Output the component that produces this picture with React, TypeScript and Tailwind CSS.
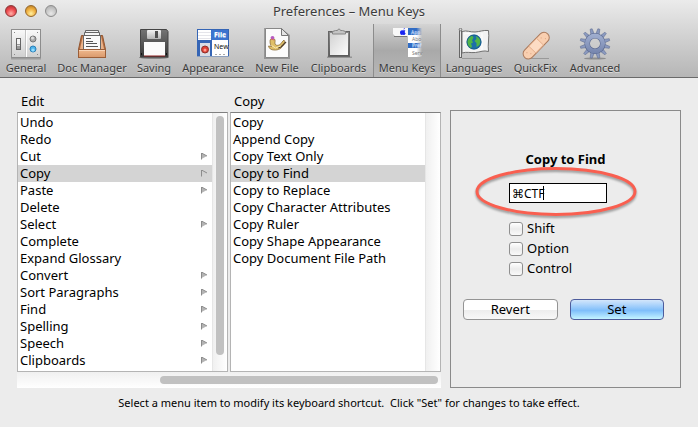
import { ReactNode, useState } from "react";
import clsx from "clsx";

type MenuItem = { name: string; sub?: boolean };
type ToolItem = { label: string; width: string; icon: ReactNode };

const GeneralIcon = () => (
  <svg width="32" height="32" viewBox="0 0 32 32">
    <defs>
      <linearGradient id="plate" x1="0" y1="0" x2="0" y2="1">
        <stop offset="0" stopColor="#fafafa" />
        <stop offset="1" stopColor="#cfcfcf" />
      </linearGradient>
    </defs>
    <rect x="1" y="3" width="30" height="28.500" fill="#777" opacity="0.5" />
    <rect x="1.500" y="1.500" width="29" height="28" fill="url(#plate)" stroke="#8d8d8d" />
    <path d="M15.500 2v27" stroke="#c4c4c4" />
    <path d="M16.500 2v27" stroke="#fff" />
    <rect x="6.500" y="10.500" width="4" height="11" fill="#999" stroke="#666" />
    <rect x="7" y="11" width="3" height="5" fill="#f5f5f5" />
    <rect x="7" y="17" width="3" height="1" fill="#ddd" />
    <circle cx="23" cy="11" r="3" fill="#a9a9a9" stroke="#777" />
    <circle cx="22.500" cy="10" r="1.500" fill="#ddd" />
    <circle cx="23" cy="21" r="3" fill="#4fb4ea" stroke="#2b7fb8" />
    <circle cx="23" cy="22" r="1.600" fill="#93dcff" />
    <g fill="#888">
      <rect x="4" y="4" width="1" height="1" />
      <rect x="27" y="4" width="1" height="1" />
      <rect x="4" y="26" width="1" height="1" />
      <rect x="27" y="26" width="1" height="1" />
    </g>
  </svg>
);

const DocManagerIcon = () => (
  <svg width="32" height="32" viewBox="0 0 32 32">
    <defs>
      <linearGradient id="tray" x1="0" y1="0" x2="0" y2="1">
        <stop offset="0" stopColor="#f0b98e" />
        <stop offset="1" stopColor="#d9996c" />
      </linearGradient>
    </defs>
    <path d="M5.500 7.500h21l3 14h-27z" fill="#b86f42" stroke="#92552f" />
    <path d="M7 8l-3 13h4V8zM25 8l3 13h-4V8z" fill="#e9b28a" />
    <path d="M9.500 2.500h13v4h-13z" fill="#f2f2f2" stroke="#666" />
    <path d="M8.500 4.500h15v5h-15z" fill="#f5f5f5" stroke="#666" />
    <path d="M7.500 7.500h17v14h-17z" fill="#fafafa" stroke="#666" />
    <path d="M10 10.500h5M10 13.500h7M10 15.500h11M10 18.500h12" stroke="#555" />
    <rect x="2.500" y="21.500" width="27" height="8" fill="url(#tray)" stroke="#9b5e38" />
    <path d="M3 22.500h26" stroke="#f8d5b8" />
  </svg>
);

const SavingIcon = () => (
  <svg width="32" height="32" viewBox="0 0 32 32">
    <defs>
      <linearGradient id="floppy" x1="0" y1="0" x2="0" y2="1">
        <stop offset="0" stopColor="#747474" />
        <stop offset="1" stopColor="#383838" />
      </linearGradient>
      <linearGradient id="shutter" x1="0" y1="0" x2="0" y2="1">
        <stop offset="0" stopColor="#f4f4f4" />
        <stop offset="1" stopColor="#b5b5b5" />
      </linearGradient>
    </defs>
    <ellipse cx="16" cy="29.500" rx="15" ry="1.300" fill="#777" />
    <path d="M2.500 1.500h26l1.500 2v25.500h-27.500z" fill="url(#floppy)" stroke="#444" />
    <rect x="9" y="2" width="14" height="9" rx="1" fill="url(#shutter)" />
    <rect x="17" y="3" width="3" height="7" fill="#505050" />
    <path d="M6 14h21v14H6z" fill="#fbfbfb" />
    <path d="M6 27.500h21v1H6z" fill="#8d2020" />
    <rect x="3" y="25" width="1" height="2" fill="#111" />
    <rect x="28" y="25" width="1" height="2" fill="#111" />
  </svg>
);

const AppearanceIcon = () => (
  <svg width="32" height="32" viewBox="0 0 32 32">
    <rect width="32" height="28" y="1" fill="#3565b5" />
    <path d="M1 2h13v10H1z" fill="#fff" />
    <path d="M1 4.500h13M1 7.500h13M1 10.500h13" stroke="#e5e5ea" />
    <path d="M14 2h17v10H14z" fill="#3c74ce" />
    <path d="M15 12h16v16H15z" fill="#fff" />
    <path d="M3 15h10v13H3z" fill="#d9dde6" />
    <path d="M0 28.500h32" stroke="#8da0bd" />
    <circle cx="8" cy="21.500" r="3.500" fill="#de3e33" stroke="#8d2f29" />
    <circle cx="8" cy="22" r="1.500" fill="#ff9e92" />
    <text x="17" y="9" fontSize="7" fontWeight="700" fontFamily="Noto Sans, sans-serif" fill="#fff">File</text>
    <text x="17" y="21" fontSize="7" fontFamily="Noto Sans, sans-serif" fill="#111">New</text>
    <path d="M18 26.500h2M22 26.500h2M26 26.500h2" stroke="#aaa" />
  </svg>
);

const NewFileIcon = () => (
  <svg width="32" height="32" viewBox="0 0 32 32">
    <path d="M3 0h17l9 7v24H3z" fill="#666" opacity="0.500" />
    <path d="M4.500.5h16l7 7v22h-23z" fill="#fbfbfb" stroke="#888" />
    <path d="M20.500.5v7h7z" fill="#e4e4e4" stroke="#777" />
    <path d="M9 13c0-3 4-4 5-1 .500 2-1 4 1 5s5-.500 6-3l2-2c1.500 3-.500 6-3 7.500 1 1-4 3-7 2.500-3 0-5-1.500-5.500-4l3 .500c-1-1.500-1.500-3-1.500-5z" fill="#dfbf68" stroke="#82632c" strokeWidth="0.700" />
    <path d="M25 14l-5 5-3 1" stroke="#4c3c2c" strokeWidth="1.300" fill="none" />
    <circle cx="11.500" cy="9.800" r="1.900" fill="#b65ac0" />
    <path d="M10 11l3 1" stroke="#d86a5b" />
    <path d="M10.500 17.500l4 2.500 5-2" stroke="#f8e9b0" fill="none" />
  </svg>
);

const ClipboardIcon = () => (
  <svg width="32" height="32" viewBox="0 0 32 32">
    <defs>
      <linearGradient id="sheet" x1="0" y1="0" x2="1" y2="1">
        <stop offset="0" stopColor="#d3d3d3" />
        <stop offset="1" stopColor="#fcfcfc" />
      </linearGradient>
      <linearGradient id="board" x1="0" y1="0" x2="0" y2="1">
        <stop offset="0" stopColor="#8a8a8a" />
        <stop offset="1" stopColor="#5a5a5a" />
      </linearGradient>
    </defs>
    <rect x="4" y="28.500" width="25" height="1.500" fill="#777" opacity="0.600" />
    <rect x="5.500" y="3.500" width="21" height="25" fill="url(#board)" stroke="#666" />
    <rect x="7" y="5" width="18" height="22" fill="url(#sheet)" />
    <path d="M9.500 6v-2.500l3-1h2l1-1.500h1l1 1.500h2l3 1v2.500z" fill="#c4c4c4" stroke="#868686" />
  </svg>
);

const MenuKeysIcon = () => (
  <svg width="32" height="32" viewBox="0 0 32 32">
    <defs>
      <linearGradient id="fade" x1="0" y1="0" x2="1" y2="0">
        <stop offset="0.600" stopColor="#fff" />
        <stop offset="1" stopColor="#fff" stopOpacity="0" />
      </linearGradient>
      <linearGradient id="fadeBlue" x1="0" y1="0" x2="1" y2="0">
        <stop offset="0.600" stopColor="#316cc4" />
        <stop offset="1" stopColor="#316cc4" stopOpacity="0" />
      </linearGradient>
    </defs>
    <path d="M2 0h15v8H4L2 6z" fill="#f8f8f8" />
    <path d="M3 8.500h13" stroke="#777" />
    <path d="M17 7h14v22H17z" fill="url(#fade)" />
    <path d="M17 0h14v7H17zM17 15h14v5H17z" fill="url(#fadeBlue)" />
    <path d="M12.500 1.500c1-.2 1.500-1 1.500-1.500-1 .2-1.500.8-1.500 1.500zM12 2.500c-1-.8-3-.2-3 2 0 1.800 1.200 2.700 2 2.500.6-.2 1-.2 1.600 0 .9.200 1.700-.8 2-1.800-1-.5-1.200-1.800-.2-2.400-.7-.8-1.600-.6-2.400-.3z" fill="#1824f2" />
    <g fontSize="5" fontFamily="Noto Sans, sans-serif">
      <text x="20" y="6" fill="#cfe0ff">App</text>
      <text x="21" y="13" fill="#777">Abo</text>
      <text x="21" y="19" fill="#cfe0ff">Pref</text>
      <text x="21" y="27" fill="#777">Serv</text>
    </g>
  </svg>
);

const LanguagesIcon = () => (
  <svg width="32" height="32" viewBox="0 0 32 32">
    <path d="M4 30.500h20" stroke="#999" />
    <path d="M4 3.500c5-1.500 8 .8 13 .5s8-2 13.500-1.500c1 7-1 14 0 21-5-1.500-8 .5-13 1s-9-1-13.500.500z" fill="#f3f3f3" stroke="#707070" />
    <path d="M6 6c4-1 7 0 10 0M24 5v17" stroke="#fff" fill="none" />
    <rect x="1.500" y="1.500" width="2" height="28" fill="#e5e5e5" stroke="#666" />
    <circle cx="2.500" cy="1.500" r="1.300" fill="#ddd" stroke="#777" />
    <circle cx="16" cy="14" r="7.500" fill="#1c6fa8" />
    <path d="M11 9.500l3-2 1.500 2-1.500 3 1 2-2 1 1 3-1.500 2-2.500-3-1-4zM18 8l3 2 1.500 3-1 4-3 2v-4l-2-2 2-2z" fill="#4fb548" />
    <circle cx="16" cy="14" r="7" fill="none" stroke="#17507d" opacity="0.600" />
  </svg>
);

const QuickFixIcon = () => (
  <svg width="32" height="32" viewBox="0 0 32 32">
    <path d="M7 30.500h22" stroke="#999" />
    <g transform="rotate(-46 16 17.500)">
      <rect x="-0.500" y="12.500" width="33" height="10.500" rx="5.200" fill="#f9cfb0" stroke="#ab7a5c" />
      <rect x="10.500" y="13" width="11" height="9.500" fill="#fcdcc4" stroke="#e0a884" strokeWidth="0.800" />
      <g fill="#e0aa86">
        <circle cx="4.500" cy="16" r="0.600" />
        <circle cx="6.500" cy="19.500" r="0.600" />
        <circle cx="25" cy="16" r="0.600" />
        <circle cx="27.500" cy="19.500" r="0.600" />
      </g>
    </g>
  </svg>
);

const AdvancedIcon = () => (
  <svg width="32" height="32" viewBox="0 0 32 32">
    <defs>
      <linearGradient id="gear" x1="0" y1="5" x2="0" y2="26" gradientUnits="userSpaceOnUse">
        <stop offset="0" stopColor="#a3b1d2" />
        <stop offset="1" stopColor="#7383ac" />
      </linearGradient>
    </defs>
    <ellipse cx="16" cy="30.500" rx="11" ry="1" fill="#8e8e8e" />
    {[0, 30, 60, 90, 120, 150, 180, 210, 240, 270, 300, 330].map((deg) => (
      <path
        key={deg}
        d="M14.300 6l.7-5.500h2l.7 5.500z"
        fill="#8a99bf"
        stroke="#5a688d"
        strokeWidth="0.500"
        transform={`rotate(${deg + 15} 16 15.500)`}
      />
    ))}
    <circle cx="16" cy="15.500" r="7.800" fill="none" stroke="#5a688d" strokeWidth="5.500" />
    <circle cx="16" cy="15.500" r="7.800" fill="none" stroke="url(#gear)" strokeWidth="4.500" />
  </svg>
);

const tools: ToolItem[] = [
  { label: "General", width: "w-[52px]", icon: <GeneralIcon /> },
  { label: "Doc Manager", width: "w-[80px]", icon: <DocManagerIcon /> },
  { label: "Saving", width: "w-[44px]", icon: <SavingIcon /> },
  { label: "Appearance", width: "w-[74px]", icon: <AppearanceIcon /> },
  { label: "New File", width: "w-[54px]", icon: <NewFileIcon /> },
  { label: "Clipboards", width: "w-[69px]", icon: <ClipboardIcon /> },
  { label: "Menu Keys", width: "w-[68px]", icon: <MenuKeysIcon /> },
  { label: "Languages", width: "w-[66px]", icon: <LanguagesIcon /> },
  { label: "QuickFix", width: "w-[57px]", icon: <QuickFixIcon /> },
  { label: "Advanced", width: "w-[62px]", icon: <AdvancedIcon /> },
];

const editItems: MenuItem[] = [
  { name: "Undo" },
  { name: "Redo" },
  { name: "Cut", sub: true },
  { name: "Copy", sub: true },
  { name: "Paste", sub: true },
  { name: "Delete" },
  { name: "Select", sub: true },
  { name: "Complete" },
  { name: "Expand Glossary" },
  { name: "Convert", sub: true },
  { name: "Sort Paragraphs", sub: true },
  { name: "Find", sub: true },
  { name: "Spelling", sub: true },
  { name: "Speech", sub: true },
  { name: "Clipboards", sub: true },
];

const copyItems: MenuItem[] = [
  { name: "Copy" },
  { name: "Append Copy" },
  { name: "Copy Text Only" },
  { name: "Copy to Find" },
  { name: "Copy to Replace" },
  { name: "Copy Character Attributes" },
  { name: "Copy Ruler" },
  { name: "Copy Shape Appearance" },
  { name: "Copy Document File Path" },
];

const lights = [
  "border-[#8d3838] bg-[radial-gradient(circle_at_50%_75%,#ffb0a8,#ee4a4f_50%,#a82a30)]",
  "border-[#94672b] bg-[radial-gradient(circle_at_50%_75%,#fff0a0,#f0b040_50%,#b0751f)]",
  "border-[#8c8c8c] bg-[radial-gradient(circle_at_50%_75%,#e8e8e8,#c8c8c8_50%,#a5a5a5)]",
];

const MenuColumn = ({
  items,
  selected,
  onSelect,
  scroll,
}: {
  items: MenuItem[];
  selected: string;
  onSelect: (name: string) => void;
  scroll?: boolean;
}) => (
  <div className="flex h-[260px] min-w-0 flex-1 border border-[#b4b4b4] border-t-[#808080] bg-white">
    <ul className="min-w-0 flex-1 pt-px">
      {items.map((item) => (
        <li key={item.name}>
          <button
            onClick={() => onSelect(item.name)}
            className={clsx(
              "flex h-[17px] w-full items-center justify-between pr-1 pl-0.5 text-left leading-[17px] whitespace-nowrap",
              item.name === selected && "bg-[#d4d4d4]"
            )}
          >
            {item.name}
            {item.sub && (
              <svg width="8" height="8" viewBox="0 0 8 8">
                <path d="M1.500 0v6L7 3z" fill={item.name === selected ? "#d0d0d0" : "#b4b4b4"} />
                <path d="M1.500 6.500V0L7 3" fill="none" stroke="#8c8c8c" />
              </svg>
            )}
          </button>
        </li>
      ))}
    </ul>
    <div className="flex w-[15px] justify-center border-l border-[#e6e6e6] bg-linear-to-r from-[#f0f0f0] to-white pt-[3px]">
      {scroll && <div className="h-[239px] w-2 rounded-full bg-[#c1c1c1]" />}
    </div>
  </div>
);

const App = () => {
  const [tool, setTool] = useState<string>("Menu Keys");
  const [menu, setMenu] = useState<string>("Copy");
  const [command, setCommand] = useState<string>("Copy to Find");
  const [keys, setKeys] = useState<string>("⌘CTF");

  return (
    <div className="min-h-screen bg-[#ececec] font-['Noto_Sans','DejaVu_Sans',sans-serif] text-[13px] text-black">
      <header className="border-b border-[#6a6a6a] bg-linear-to-b from-[#ebebeb] to-[#b6b6b6]">
        <div className="relative flex h-6 items-center justify-center">
          <div className="absolute top-[5px] left-[5px] flex gap-2">
            {lights.map((light) => (
              <button key={light} aria-label="Window control" className={clsx("size-3 rounded-full border", light)} />
            ))}
          </div>
          <h1 className="text-[#3c3c3c] [text-shadow:0_1px_0_#ffffff90]">Preferences – Menu Keys</h1>
        </div>
        <nav className="flex">
          {tools.map((item) => (
            <button
              key={item.label}
              onClick={() => setTool(item.label)}
              className={clsx(
                "flex h-[53px] flex-col items-center border-x pt-1 text-[11px] leading-[15px] whitespace-nowrap text-[#3a3a3a] [text-shadow:0_1px_0_#ffffff80]",
                item.width,
                item.label === tool
                  ? "border-[#8c8c8c] bg-linear-to-b from-[#d4d4d4] via-[#a9a9a9] to-[#b8b8b8]"
                  : "border-transparent"
              )}
            >
              {item.icon}
              {item.label}
            </button>
          ))}
        </nav>
      </header>

      <main className="px-[17px] pt-[15px]">
        <div className="flex gap-[9px]">
          <section className="min-w-0 flex-1">
            <div className="flex gap-0.5 pb-0.5 leading-[17px]">
              <h2 className="flex-1 pl-1">Edit</h2>
              <h2 className="flex-1 pl-1">Copy</h2>
            </div>
            <div className="flex gap-0.5">
              <MenuColumn items={editItems} selected={menu} onSelect={setMenu} scroll />
              <MenuColumn items={copyItems} selected={command} onSelect={setCommand} />
            </div>
            <div className="flex h-4 items-center justify-end bg-linear-to-b from-[#f0f0f0] to-white pr-[3px]">
              <div className="h-2 w-[66%] rounded-full bg-[#c1c1c1]" />
            </div>
          </section>

          <section className="mt-[17px] flex w-[231px] flex-col border border-[#8a8a8a] pt-10">
            <h3 className="text-center leading-4 font-bold">{command}</h3>
            <div className="mt-4 ml-[58px] w-[98px]">
              <div className="relative">
                <input
                  aria-label="Shortcut"
                  value={keys}
                  onChange={(e) => setKeys(e.target.value)}
                  className="block h-5 w-full border border-black bg-white px-0.5 text-xs outline-none"
                />
                <span className="absolute top-[3px] left-[34px] h-[14px] w-px bg-black" />
                <svg
                  className="pointer-events-none absolute -top-[17px] -left-[34px] max-w-none drop-shadow-[0_2px_1px_rgba(0,0,0,0.35)]"
                  width="164"
                  height="54"
                  viewBox="0 0 164 54"
                >
                  <ellipse cx="81" cy="25.500" rx="79" ry="23" fill="none" stroke="#f95f50" strokeWidth="3" />
                </svg>
              </div>
              <div className="mt-4 flex flex-col">
                {["Shift", "Option", "Control"].map((name) => (
                  <label key={name} className="flex h-5 items-center gap-1">
                    <input
                      type="checkbox"
                      className="size-3.5 appearance-none rounded-[3px] border border-[#8f8f8f] bg-linear-to-b from-white via-[#ececec] to-[#fafafa] checked:bg-[#6db3f2]"
                    />
                    {name}
                  </label>
                ))}
              </div>
            </div>
            <div className="mt-5 flex gap-3 pr-4 pl-3">
              <button className="h-[21px] flex-1 rounded-[4px] border border-[#949494] bg-linear-to-b from-white from-50% via-[#ececec] via-50% to-[#f8f8f8] leading-[19px]">
                Revert
              </button>
              <button className="h-[21px] flex-1 rounded-[4px] border border-[#4d5c9c] bg-linear-to-b from-[#d3e6fb] via-[#7fbefa] via-55% to-[#c4f4ff] leading-[19px]">
                Set
              </button>
            </div>
          </section>
        </div>
        <p className="pt-[7px] text-center text-[11px] leading-4 whitespace-pre">
          {'Select a menu item to modify its keyboard shortcut.  Click "Set" for changes to take effect.'}
        </p>
      </main>
    </div>
  );
};

export default App;
